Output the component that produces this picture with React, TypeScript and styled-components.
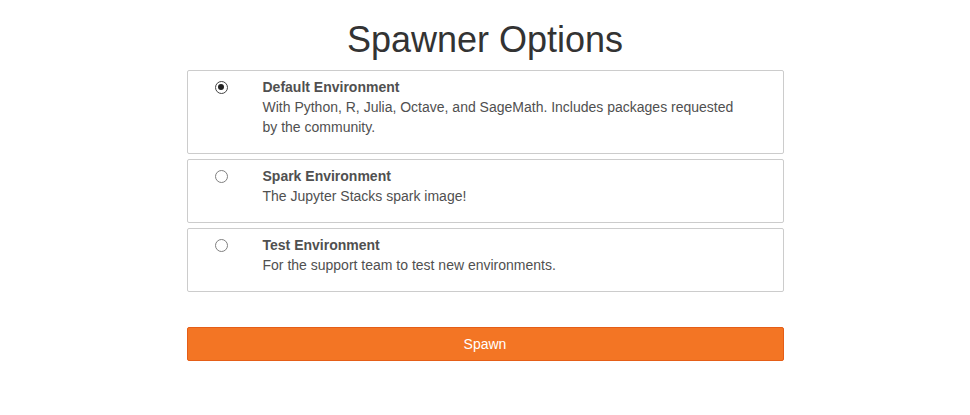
import React, { useState } from "react";
import styled, { createGlobalStyle } from "styled-components";

const Global = createGlobalStyle`
  html, body { margin: 0; padding: 0; background: #fff; }
  body {
    font-family: "Liberation Sans", Arial, Helvetica, sans-serif;
    font-size: 14px;
    line-height: 20px;
    color: #333;
  }
  * { box-sizing: border-box; }
`;

const Page = styled.div`
  width: 597px;
  margin: 0 auto;
  display: flex;
  flex-direction: column;
`;

const Title = styled.h1`
  margin: 20px 0 10px;
  font-size: 36px;
  line-height: 39.6px;
  font-weight: 500;
  text-align: center;
  color: #333;
`;

const OptionList = styled.div`
  display: flex;
  flex-direction: column;
  gap: 5px;
`;

const Card = styled.label`
  display: flex;
  align-items: flex-start;
  border: 1px solid #ccc;
  border-radius: 2px;
  padding: 6px 0 16px 27px;
  cursor: pointer;
`;

const Radio = styled.input.attrs({ type: "radio" })`
  appearance: none;
  -webkit-appearance: none;
  width: 13px;
  height: 13px;
  margin: 4px 35px 0 0;
  border: 1.5px solid #808080;
  border-radius: 50%;
  background: #fff;
  flex-shrink: 0;
  display: grid;
  place-items: center;
  &:checked {
    border-color: #444;
  }
  &:checked::after {
    content: "";
    width: 6px;
    height: 6px;
    border-radius: 50%;
    background: #222;
  }
`;

const TextCol = styled.div`
  max-width: 485px;
  color: #505050;
`;

const OptName = styled.div`
  font-weight: bold;
`;

const OptDesc = styled.div``;

const SpawnButton = styled.button`
  margin-top: 35px;
  height: 34px;
  width: 100%;
  background: #f37524;
  border: 1px solid #e55e17;
  border-radius: 2px;
  color: #fff;
  font-family: "Liberation Sans", Arial, Helvetica, sans-serif;
  font-size: 14px;
  line-height: 20px;
  cursor: pointer;
`;

const options = [
  {
    name: "Default Environment",
    desc: "With Python, R, Julia, Octave, and SageMath. Includes packages requested by the community.",
  },
  { name: "Spark Environment", desc: "The Jupyter Stacks spark image!" },
  { name: "Test Environment", desc: "For the support team to test new environments." },
];

export default function App() {
  const [sel, setSel] = useState(0);
  return (
    <>
      <Global />
      <Page>
        <Title>Spawner Options</Title>
        <OptionList>
          {options.map((o, i) => (
            <Card key={o.name}>
              <Radio name="profile" checked={sel === i} onChange={() => setSel(i)} />
              <TextCol>
                <OptName>{o.name}</OptName>
                <OptDesc>{o.desc}</OptDesc>
              </TextCol>
            </Card>
          ))}
        </OptionList>
        <SpawnButton>Spawn</SpawnButton>
      </Page>
    </>
  );
}
